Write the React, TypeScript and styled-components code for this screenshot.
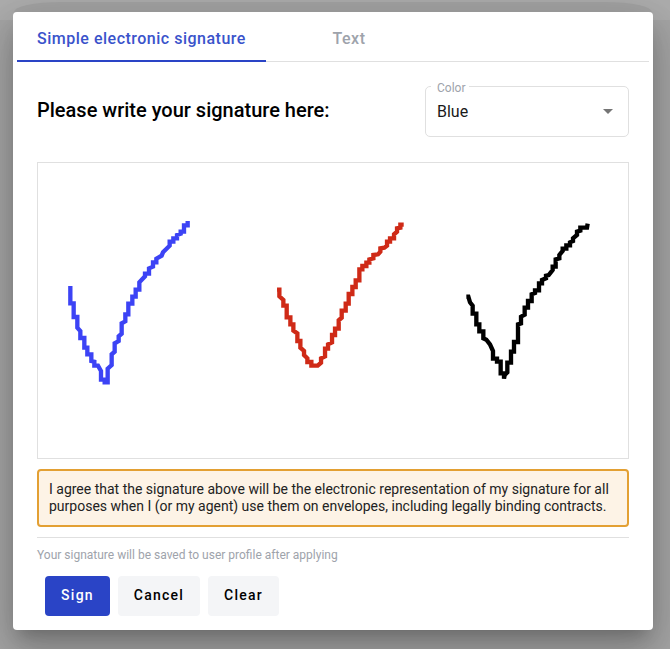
import React from "react";
import styled, { createGlobalStyle } from "styled-components";

const GlobalStyle = createGlobalStyle`
  * { box-sizing: border-box; }
  body { margin: 0; font-family: Roboto, sans-serif; }
`;

const Backdrop = styled.div`
  height: 649px;
  padding: 12px 17px 0 13px;
  overflow: hidden;
  background: linear-gradient(#adadad 20px, #a6a6a6 20px);
`;

const Dialog = styled.section`
  position: relative;
  height: 618px;
  padding: 0 4px;
  border-radius: 4px;
  background: #fff;
  box-shadow:
    0 11px 15px -7px rgba(0, 0, 0, 0.2),
    0 24px 38px 3px rgba(0, 0, 0, 0.14),
    0 9px 46px 8px rgba(0, 0, 0, 0.12);

  /* Darker rim of shadow above the top edge. */
  &::before {
    content: "";
    position: absolute;
    inset: -10px 1px auto;
    height: 10px;
    border-radius: 45px 45px 0 0 / 10px 10px 0 0;
    background: rgba(0, 0, 0, 0.055);
  }
`;

const Tabs = styled.nav`
  display: flex;
  height: 50px;
  border-bottom: 1px solid #e0e0e0;
`;

const Tab = styled.button<{ $active?: boolean; $width: number }>`
  width: ${(p) => p.$width}px;
  height: 50px;
  padding: 5px 0 0;
  border: 0;
  border-bottom: 2px solid ${(p) => (p.$active ? "#2a44c6" : "transparent")};
  background: none;
  color: ${(p) => (p.$active ? "#3a53cb" : "#9ea3ab")};
  font: 500 16px/20px Roboto, sans-serif;
  letter-spacing: 0.5px;
`;

const Content = styled.div`
  padding: 24px 20px 0;
`;

const Header = styled.div`
  display: flex;
  justify-content: space-between;
  height: 76px;
`;

const Title = styled.h2`
  margin: 12px 0 0;
  font-size: 20px;
  line-height: 24px;
  font-weight: 500;
  color: #000;
`;

const Select = styled.fieldset`
  display: flex;
  align-items: center;
  justify-content: space-between;
  position: relative;
  width: 204px;
  height: 51px;
  margin: 0;
  padding: 0 15px 0 11px;
  border: 1px solid #e0e0e0;
  border-radius: 5px;
  font-size: 16px;
  color: #1a1a1a;
`;

const Label = styled.span`
  position: absolute;
  top: -7px;
  left: 5px;
  padding: 0 4px 0 6px;
  background: #fff;
  color: #9ea3ab;
  font-size: 12px;
  line-height: 16px;
`;

const Caret = styled.span`
  border: 5px solid transparent;
  border-top-color: #757575;
  border-bottom: 0;
`;

const Canvas = styled.div`
  height: 297px;
  border: 1px solid #e0e0e0;
  svg { display: block; }
`;

const Consent = styled.p`
  height: 58px;
  margin: 10px 0;
  padding: 10px;
  border: 2px solid #e3a033;
  border-radius: 4px;
  background: #fdf3e6;
  color: #222;
  font-size: 14px;
  line-height: 17px;
`;

const Hint = styled.p`
  margin: 0;
  padding-top: 9px;
  border-top: 1px solid #e0e0e0;
  color: #9ea3ab;
  font-size: 12px;
  line-height: 16px;
`;

const Actions = styled.div`
  display: flex;
  gap: 8px;
  padding: 13px 8px 0;
`;

const Button = styled.button<{ $primary?: boolean; $width: number }>`
  width: ${(p) => p.$width}px;
  height: 40px;
  padding: 0 0 2px;
  border: 0;
  border-radius: 4px;
  background: ${(p) => (p.$primary ? "#2a44c6" : "#f4f5f7")};
  color: ${(p) => (p.$primary ? "#fff" : "#000")};
  font: 500 14px/38px Roboto, sans-serif;
  letter-spacing: 1.25px;
`;

const strokes = [
  {
    color: "#3c43f5",
    x: 22,
    points:
      "31,213 31,265 41,265 41,306 52,306 52,338 61,348 61,369 73,369 73,398 82,398 82,418 94,418 94,438 103,440 103,452 114,452 123,468 123,494 134,494 134,502 143,502 143,461 155,450 155,418 164,410 164,385 176,378 176,364 185,356 185,325 196,319 196,298 205,298 205,266 217,266 217,245 227,245 227,224 238,224 238,202 255,184 255,176 267,176 267,160 279,155 279,142 289,142 289,131 305,122 309,112 329,92 329,80 340,80 340,70 351,70 351,60 362,56 362,50 372,50 372,31 383,31 383,18",
  },
  {
    color: "#cf2a17",
    x: 231.7,
    points:
      "22,224 29,224 29,244 41,255 41,272 51,272 51,307 62,307 62,328 71,328 71,347 83,355 83,378 92,378 92,398 103,408 103,420 113,430 113,441 125,441 125,452 144,452 154,443 154,430 166,424 166,401 175,401 175,388 187,382 187,360 196,360 196,341 207,341 207,316 216,308 216,287 228,287 228,266 237,266 237,237 248,237 248,216 258,216 258,196 269,196 269,163 278,163 278,153 290,153 290,143 299,143 299,133 311,130 311,120 325,118 332,110 332,100 344,98 352,92 352,80 361,80 361,70 373,70 373,58 382,50 382,40 392,38 392,29 402,29",
  },
  {
    color: "#000",
    x: 422,
    points:
      "19,245 25,245 30,262 38,272 38,296 49,296 49,328 58,328 58,349 70,349 70,370 79,374 90,388 99,408 99,431 111,431 111,440 122,440 122,475 132,475 132,491 134,480 142,472 142,443 153,443 153,410 162,410 162,381 174,381 174,328 183,325 183,305 194,299 194,278 204,278 204,258 215,258 215,238 225,234 225,226 237,226 237,205 246,205 246,195 258,190 258,182 266,180 278,165 278,155 287,155 287,133 298,130 298,120 308,108 308,101 319,101 319,91 330,91 330,82 339,78 339,70 351,60 351,50 361,47 361,38 381,38 383,26",
  },
];

export default function App() {
  return (
    <>
      <GlobalStyle />
      <Backdrop>
        <Dialog>
          <Tabs>
            <Tab $active $width={249}>Simple electronic signature</Tab>
            <Tab $width={166}>Text</Tab>
          </Tabs>
          <Content>
            <Header>
              <Title>Please write your signature here:</Title>
              <Select>
                <Label>Color</Label>
                Blue
                <Caret />
              </Select>
            </Header>
            <Canvas>
              <svg width="590" height="295" fill="none" strokeWidth="13">
                {strokes.map((s) => (
                  <polyline
                    key={s.color}
                    points={s.points}
                    stroke={s.color}
                    transform={`translate(${s.x} 52) scale(${1 / 3})`}
                  />
                ))}
              </svg>
            </Canvas>
            <Consent>
              I agree that the signature above will be the electronic representation of my signature for all
              purposes when I (or my agent) use them on envelopes, including legally binding contracts.
            </Consent>
            <Hint>Your signature will be saved to user profile after applying</Hint>
            <Actions>
              <Button $primary $width={65}>Sign</Button>
              <Button $width={82}>Cancel</Button>
              <Button $width={71}>Clear</Button>
            </Actions>
          </Content>
        </Dialog>
      </Backdrop>
    </>
  );
}
